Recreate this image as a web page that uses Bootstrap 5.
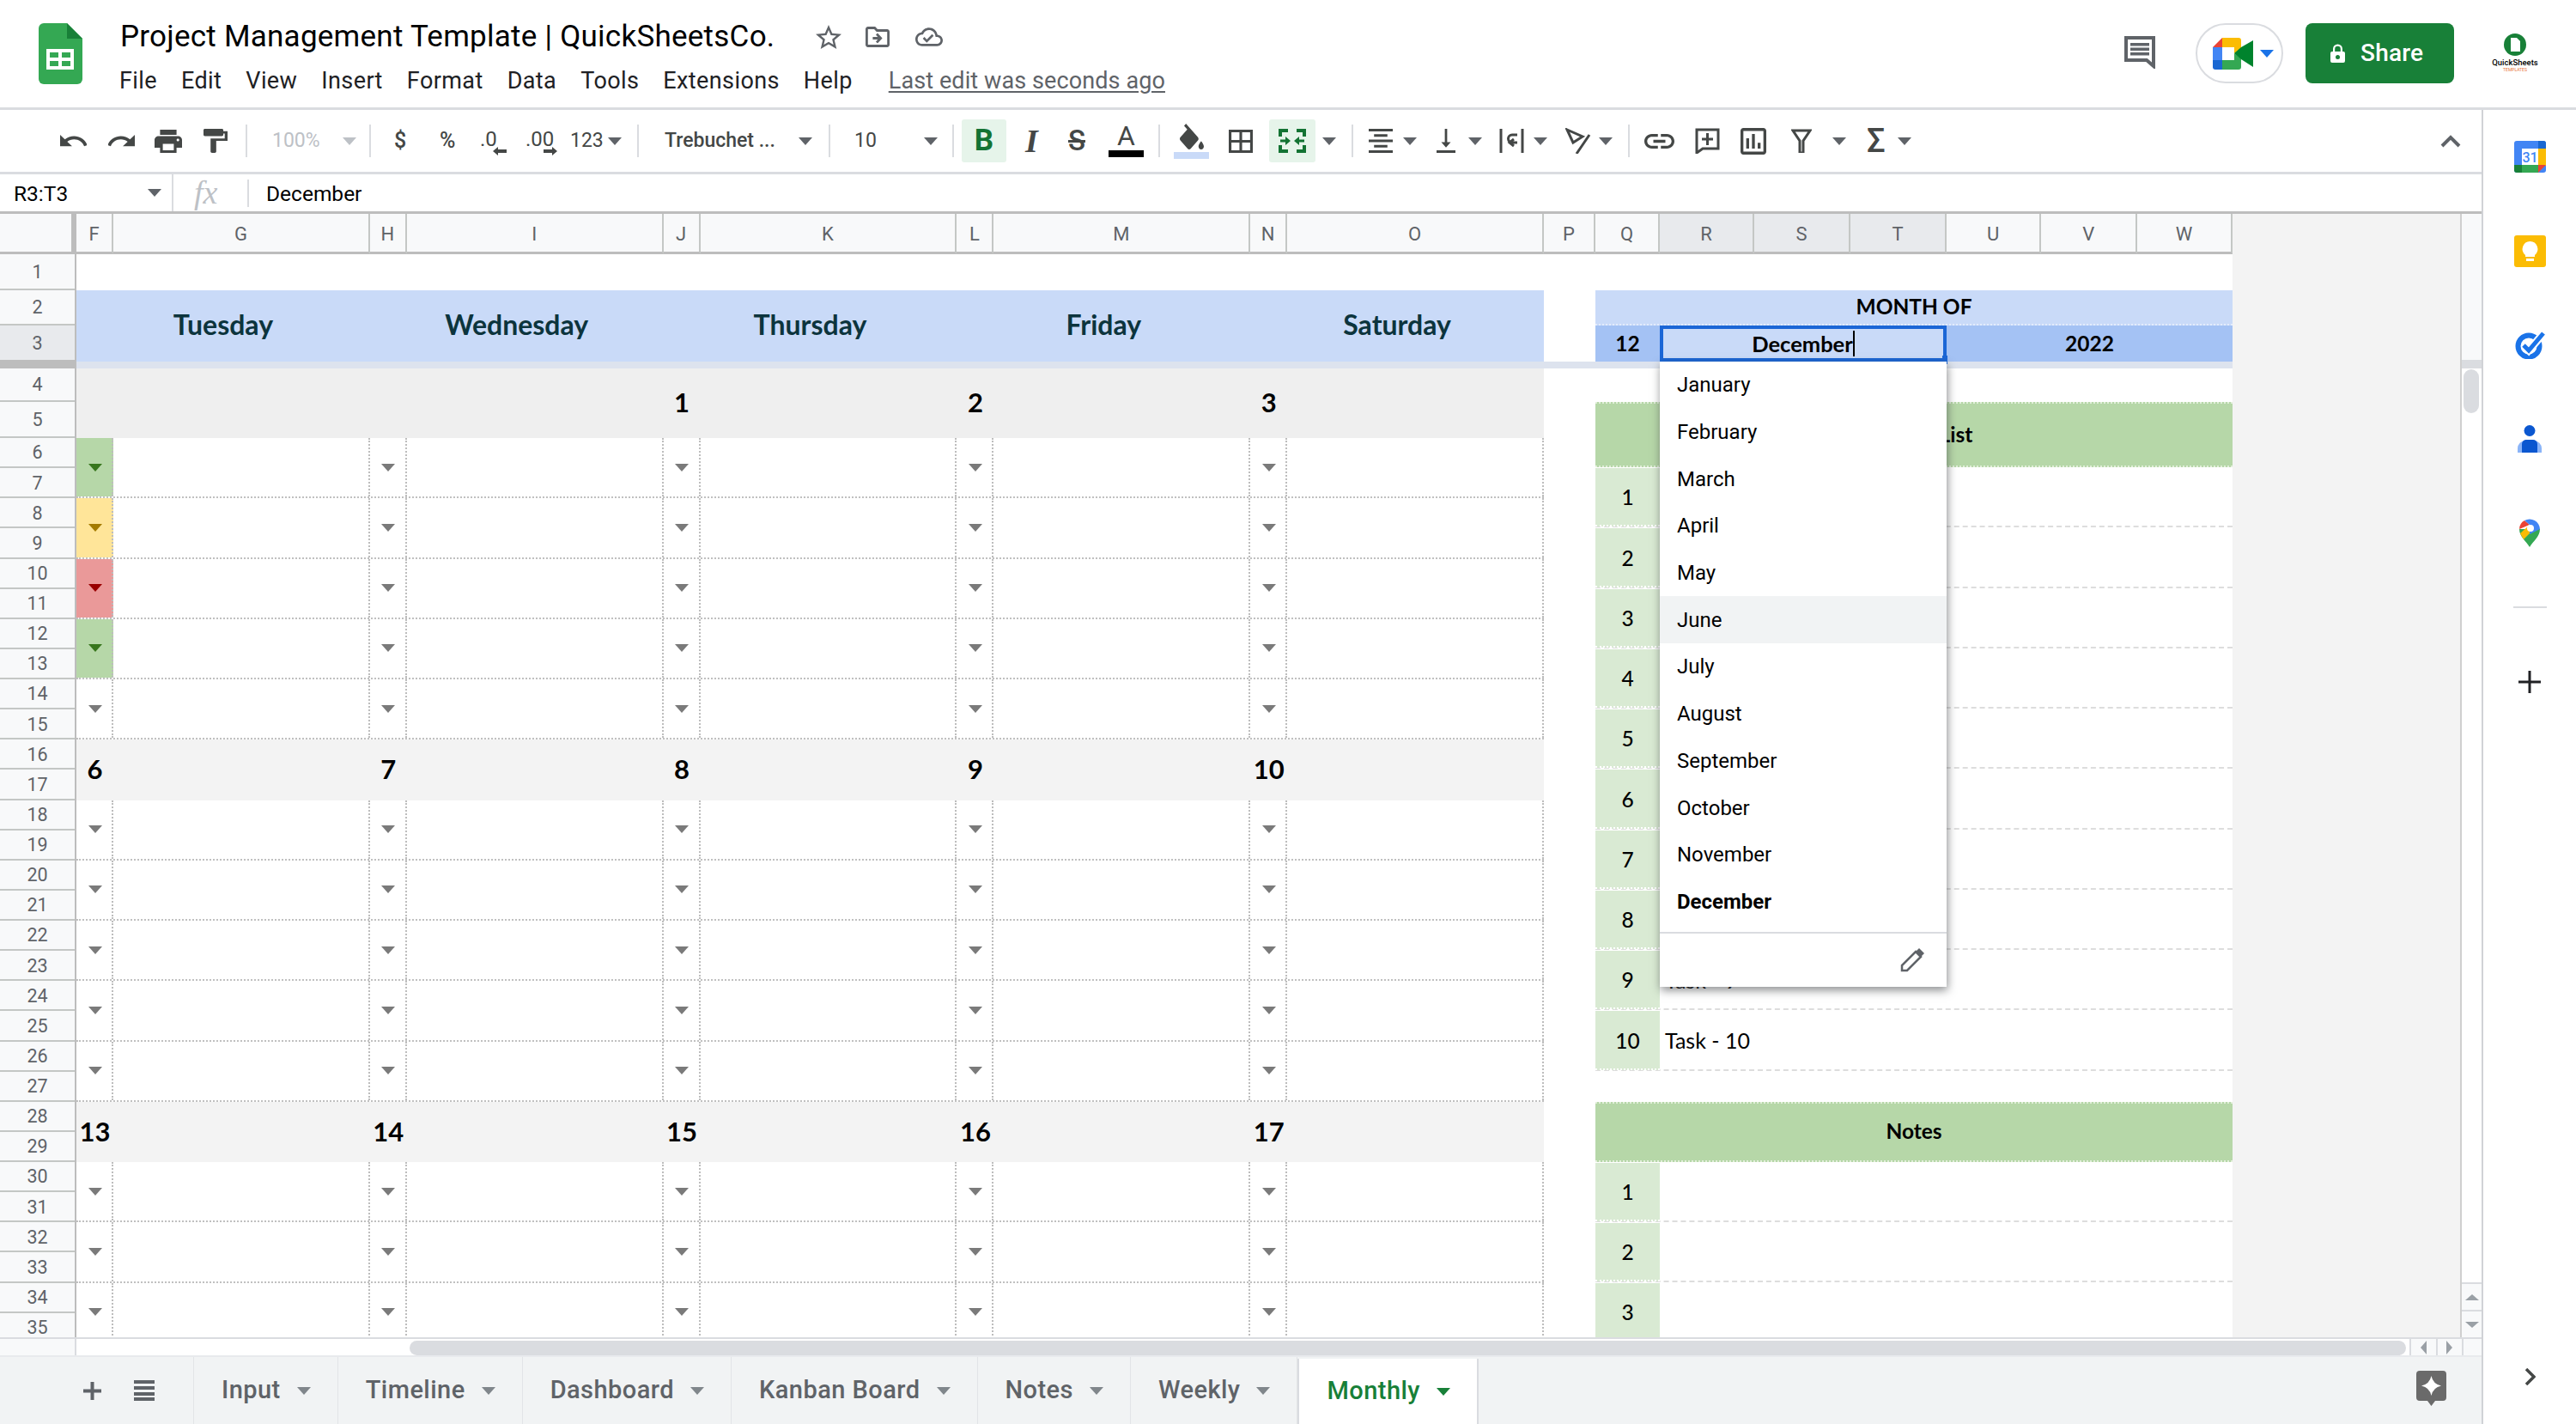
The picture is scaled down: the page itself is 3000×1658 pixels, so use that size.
<!doctype html>
<html lang="en"><head><meta charset="utf-8"><title>Project Management Template</title>
<link href="https://cdn.jsdelivr.net/npm/bootstrap@5.3.0/dist/css/bootstrap.min.css" rel="stylesheet">
<style>
html,body{margin:0;width:3000px;height:1658px;overflow:hidden;background:#fff;font-family:Roboto,sans-serif;color:#000}
.app{width:3000px;height:1658px}
.topbar{height:128px;border-bottom:3px solid #dadce0;flex:none}
.logo{margin:27px 44px 0 45px;flex:none}
.title{font-size:35px;line-height:44px;margin-top:21px;letter-spacing:.25px;white-space:nowrap}
.ti{margin-left:48px}
.ti2{margin-left:28px}.ti3{margin-left:30px}
.menu{gap:28px;font-size:27px;line-height:34px;margin-top:12px;letter-spacing:.4px;color:#202124;margin-left:-1px}
.lastedit{margin-left:14px;color:#5f6368;text-decoration:underline;text-underline-offset:3px;font-size:27px;letter-spacing:.1px}
.topright{margin-left:auto;align-items:flex-start}
.cmt{margin:42px 46px 0 0}
.meetpill{width:102px;height:70px;border:2px solid #dadce0;border-radius:36px;margin-top:27px;padding-left:18px;gap:8px}
.tri{width:0;height:0;border-left:8px solid transparent;border-right:8px solid transparent;border-top:9px solid #5f6368;display:block}
.tri.tblue{border-top-color:#1a73e8}
.share{background:#188038;color:#fff;border:0;border-radius:8px;width:173px;height:70px;margin:27px 0 0 26px;font-size:28px;font-weight:500;gap:18px;padding:0 0 0 29px;letter-spacing:.2px}
.profile{width:142px;padding-top:39px}
.profile b{font-size:9.5px;line-height:10px;font-weight:500;display:block;margin-top:3px}
.profile i{font-size:5px;line-height:6px;color:#e8743b;font-style:normal;display:block}
.left{width:2892px;flex:none;border-right:2px solid #d0d2d6}
.tool{height:75px;flex:none;border-bottom:3px solid #dadce0;display:grid;padding-left:70px;align-items:center;justify-items:start;color:#444746;font-size:23px;
grid-template-columns:56px 54px 57px 49px 31px 82px 31px 29px 53px 47px 53px 52px 44px 34px 32px 156px 35px 30px 81px 33px 11px 68px 53px 50px 58px 18px 64px 47px 62px 34px 20px 40px 39px 37px 36px 40px 37px 39px 34px 19px 59px 53px 59px 48px 40px 36px 40px 1fr}
.sep{width:2px;height:38px;background:#dadce0;display:block}
.gray{color:#bdc1c6}.gray .tri{border-top-color:#bdc1c6}
.bigm{font-size:25px;font-weight:500}
.hl{background:#e6f4ea;color:#137333;width:52px;height:50px;border-radius:3px;font-weight:700;font-size:35px;line-height:50px}
.hl2{width:54px}
.fi{font-family:"Liberation Serif",serif;font-style:italic;font-weight:700;font-size:38px;line-height:38px;padding-left:6px}
.fs{font-size:33px;text-decoration:line-through;text-decoration-thickness:3px;line-height:38px;font-weight:500;padding-left:3px}
.fa{display:flex;flex-direction:column;align-items:center;width:41px;font-size:32px;line-height:30px;margin-top:-3px}
.fa u,.fc u{display:block;width:41px;height:8px;background:#000;margin-top:2px}
.fc{display:flex;flex-direction:column;align-items:center;width:41px}
.fc u{background:#c9daf8;margin-top:3px}
.dec{display:flex;flex-direction:column;line-height:24px;font-size:24px;margin-top:3px}
.dec svg{margin-top:-3px;align-self:flex-end}
.dec.d1{width:31px}.dec.d2{width:37px}
.sig{font-size:38px;line-height:38px;font-weight:500}
.fx{height:46px;flex:none;border-bottom:3px solid #bdbdbd;font-size:24.5px}
.nb{width:202px;border-right:2px solid #dadce0;padding-left:16px;flex:none;height:100%}
.nb span,.fx>span{padding-top:3px}
.fxi{width:86px;flex:none;font-family:"Liberation Serif",serif;font-style:italic;color:#bdc1c6;font-size:38px;padding-left:24px}
.fxs{width:2px;height:32px;background:#dadce0;margin-right:20px}
.gridwrap{height:1308px;flex:none}
.sheet{width:2867px;flex:none;overflow:hidden;background:#f3f3f3;border-right:2px solid #cfcfcf}
.colh{height:47px;flex:none;color:#5f6368;font-size:22px}
.ch{height:47px;display:flex;align-items:center;justify-content:center;background:#f8f9fa;border-right:2px solid #c4c7c5;border-bottom:3px solid #bdbdbd;flex:none;padding-top:2px}
.ch.s{background:#e8eaed}
.corner{width:89px;height:47px;background:#f8f9fa;border-right:6px solid #bdbdbd;border-bottom:3px solid #bdbdbd;flex:none}
.cn{width:43px;flex:none}.cw{width:298.8px;flex:none}.cp{width:60px;flex:none}.cq{width:75px;flex:none}
.cr{width:110px;flex:none}.cs{width:112px;flex:none}.cu{width:110.5px;flex:none}.cv{width:111.5px;flex:none}.cx{width:111px;flex:none}
.rh{width:89px;flex:none;background:#f8f9fa;color:#5f6368;font-size:21.5px;border-right:2px solid #bdbdbd}
.rh div{display:flex;align-items:center;justify-content:center;border-bottom:2px solid #c4c7c5;height:35.14px;padding-top:2px}
.rh .r1{height:42px}.rh .r2{height:41px}.rh .r3{height:42px;background:#e8eaed;border-bottom:2px solid #bdbdbd}.rh .r4{height:39px}.rh .r5{height:42px}
.frozen{height:125px;flex:none}
.cal{width:1709px;flex:none;background:#fff;font-family:Lato,sans-serif}
.dayhd{height:83px;margin-top:42px;background:#c9daf8;color:#0c343d;font-size:32px;font-weight:700;padding-bottom:3px}
.dayhd span{width:341.8px;text-align:center;flex:none}
.white{background:#fff}
.panel{width:742px;flex:none;background:#fff;font-family:Lato,sans-serif;font-size:24.5px}
.m1{height:41px;margin-top:42px;background:#c9daf8;font-weight:700;border-bottom:2px dotted #e3ecfb}
.m2{height:42px;background:#a4c2f4;font-weight:700}
.editor{width:334px;flex:none;background:#c9daf8;border:4px solid #1b66d6;height:42px;position:relative;font-size:25.5px}
.editor em{font-style:normal;border-right:2px solid #000;line-height:30px}
.handle{position:absolute;right:-5px;bottom:-7px;width:6px;height:10px;background:#1b66d6}
.menu-dd.dropdown-menu{position:absolute;left:-4px;top:38px;width:334px;margin:0;padding:0;border:0;border-radius:0;z-index:1000;box-shadow:1px 4px 10px rgba(60,64,67,.6);background:#fff;font-family:Roboto,sans-serif;font-weight:400;font-size:24px}
.menu-dd .dropdown-item{height:54.7px;padding:0 0 0 20px;display:flex;align-items:center;color:#000}
.menu-dd .dropdown-item.hov{background:#f1f3f4}
.menu-dd .dropdown-item.cur{font-weight:700}
.menu-dd .ft{border-top:2px solid #dadce0;height:64px;margin-top:8px;display:flex;align-items:center;justify-content:flex-end;padding-right:26px}
.band{height:8px;flex:none}
.band .a{width:89px;background:#bdbdbd;flex:none}
.band .b{width:2511px;background:#dde3ee;flex:none}
.bodyrow{flex:1 1 auto;min-height:0;overflow:hidden}
.day{height:70.28px;background:#f3f3f3;font-weight:700;font-size:31px;line-height:1;padding-bottom:2px}
.day.first{height:81px;background:#efefef}
.day .cn{display:flex;justify-content:center;align-items:center;height:100%}
.tr{height:70.28px;border-bottom:2px dotted #c0c0c0}
.tr .cn{display:flex;align-items:center;justify-content:center;border-right:2px dotted #bdbdbd;height:100%;padding-left:2px}
.tr .cw{border-right:2px dotted #bdbdbd;height:100%}
.ar{width:0;height:0;border-left:8px solid transparent;border-right:8px solid transparent;border-top:9px solid #7a7a7a;display:block}
.g1{background:#b6d7a8}.g1 .ar{border-top-color:#38761d}
.g2{background:#ffe599}.g2 .ar{border-top-color:#a47b00}
.g3{background:#ea9999}.g3 .ar{border-top-color:#990000}
.phead{height:76px;margin-top:39px;background:#b6d7a8;font-weight:700;border-top:2px dotted #e2efda;border-bottom:2px dotted #e2efda}
.phead.n{height:70px;margin-top:36px}
.prow{height:70.28px;border-bottom:2px dashed #ddd}
.prow>.cq{height:100%;background:#d9ead3;display:flex;align-items:center;justify-content:center;font-weight:500;border-bottom:2px dotted #fff;margin-bottom:-2px;padding-top:3px}
.prow>.t{padding:3px 0 0 6px;font-size:25px}
.vs{width:23px;flex:none;background:#fff}
.vs .t{height:170px;background:#f8f9fa;flex:none}
.vs .b{height:10px;background:#dadce0;flex:none}
.vs .th{width:18px;height:51px;background:#dadce0;border-radius:9px;margin:1px 0 0 2px;flex:none}
.vs .k{height:32px;background:#f8f9fa;border-top:2px solid #dadce0;flex:none;display:flex;align-items:center;justify-content:center}
.upar{width:0;height:0;border-left:8px solid transparent;border-right:8px solid transparent;border-bottom:7px solid #9aa0a6}
.dnar{width:0;height:0;border-left:8px solid transparent;border-right:8px solid transparent;border-top:7px solid #9aa0a6}
.lfar{width:0;height:0;border-top:8px solid transparent;border-bottom:8px solid transparent;border-right:7px solid #9aa0a6}
.rtar{width:0;height:0;border-top:8px solid transparent;border-bottom:8px solid transparent;border-left:7px solid #9aa0a6}
.hs{height:23px;flex:none;border-top:2px solid #dadce0;border-bottom:2px solid #e8eaed}
.hs .l{width:89px;background:#f8f9fa;border-right:2px solid #dadce0;flex:none}
.hs .tr2{width:2717px;flex:none;padding:2px 0 0 388px}
.hs .tr2 i{display:block;width:2325px;height:17px;background:#dadce0;border-radius:9px}
.hs .bt{width:30.5px;flex:none;background:#f8f9fa;border-left:2px solid #dadce0;display:flex;align-items:center;justify-content:center}
.hs .co{flex:1 1 auto;background:#f8f9fa;border-left:2px solid #dadce0}
.tabs{flex:1 1 auto;background:#f1f3f4;font-size:29px;font-weight:500;color:#5f6368;letter-spacing:.45px}
.tctl{width:226px;flex:none;padding-left:97px;gap:38px;border-right:1px solid #e2e4e7;height:100%}
.tab{height:100%;padding:0 31px 0 32px;gap:19px;border-right:1px solid #e2e4e7;flex:none}
.tab .tri{border-top-color:#80868b}
.tab.act{background:#fff;color:#188038;margin-top:2px;height:76px;border-left:2px solid #dadce0;border-right:2px solid #dadce0}
.tab.act .tri{border-top-color:#188038}
.explore{margin-left:auto;margin-right:41px;margin-top:-6px}
.side{width:108px;flex:none}
.sw{height:109.5px;flex:none}
.sd{width:39px;height:2px;background:#dadce0;margin:30px auto 0;flex:none}
.sp{height:60px;margin-top:56px;flex:none}
.sc{height:60px;margin-top:auto;margin-bottom:25px;flex:none}
</style></head>
<body>
<div class="app d-flex flex-column">
<header class="topbar d-flex">
 <svg class="logo" width="51" height="71" viewBox="0 0 51 71"><path fill="#34a853" d="M6 0h27l18 18v47a6 6 0 0 1-6 6H6a6 6 0 0 1-6-6V6a6 6 0 0 1 6-6z"/><path fill="#188038" d="M33 0l18 18-18 0z"/><path fill="#fff" d="M9 30h32v24H9z"/><path fill="#34a853" d="M13 34h10v6H13zM27 34h10v6H27zM13 44h10v6H13zM27 44h10v6H27z"/></svg>
 <div class="flex-shrink-0">
  <div class="title d-flex align-items-center">Project Management Template | QuickSheetsCo.
   <svg class="ti" width="30" height="28" viewBox="2 2 20 19" preserveAspectRatio="none"><path fill="#5f6368" d="M22 9.24l-7.19-.62L12 2 9.19 8.63 2 9.24l5.46 4.73L5.82 21 12 17.27 18.18 21l-1.63-7.03L22 9.24zM12 15.4l-3.76 2.27 1-4.28-3.32-2.88 4.38-.38L12 6.1l1.71 4.04 4.38.38-3.32 2.88 1 4.28L12 15.4z"/></svg>
   <svg class="ti2" width="28" height="24" viewBox="2 4 20 16" preserveAspectRatio="none"><path fill="#5f6368" d="M20 6h-8l-2-2H4c-1.1 0-1.99.9-1.99 2L2 18c0 1.1.9 2 2 2h16c1.1 0 2-.9 2-2V8c0-1.1-.9-2-2-2zm0 12H4V6h5.17l2 2H20v10zm-8.01-9l-1.41 1.41L12.16 12H8v2h4.16l-1.59 1.59L11.99 17 16 13.01 11.99 9z"/></svg>
   <svg class="ti3" width="32" height="22" viewBox="0 4 24 16"><path fill="#5f6368" d="M19.35 10.04C18.67 6.59 15.64 4 12 4 9.11 4 6.6 5.64 5.35 8.04 2.34 8.36 0 10.91 0 14c0 3.31 2.69 6 6 6h13c2.76 0 5-2.24 5-5 0-2.64-2.05-4.78-4.65-4.96zM19 18H6c-2.21 0-4-1.79-4-4 0-2.05 1.53-3.76 3.56-3.97l1.07-.11.5-.95C8.08 7.14 9.94 6 12 6c2.62 0 4.88 1.86 5.39 4.43l.3 1.5 1.53.11c1.56.1 2.78 1.41 2.78 2.96 0 1.65-1.35 3-3 3zm-9-3.82l-2.09-2.09L6.5 13.5 10 17l6.01-6.01-1.41-1.41z"/></svg>
  </div>
  <nav class="menu d-flex"><span>File</span><span>Edit</span><span>View</span><span>Insert</span><span>Format</span><span>Data</span><span>Tools</span><span>Extensions</span><span>Help</span><span class="lastedit">Last edit was seconds ago</span></nav>
 </div>
 <div class="topright d-flex">
  <svg class="cmt" width="38" height="38" viewBox="0 0 38 38"><path fill="#fff" stroke="#5f6368" stroke-width="4" d="M3 2h32v25 8l-8-7H3z"/><path fill="#5f6368" d="M8 8h22v3.5H8zM8 13.5h22V17H8zM8 19h22v3.5H8z"/></svg>
  <div class="meetpill d-flex align-items-center">
   <svg width="47" height="37" viewBox="0 0 47 37"><path fill="#ea4335" d="M11 0 0 11h11z"/><path fill="#fbbc04" d="M11 0h19a3 3 0 0 1 3 3v10l-8 5v-7H11z"/><path fill="#4285f4" d="M0 11h11v15H0z"/><path fill="#1967d2" d="M0 26h11v11H3a3 3 0 0 1-3-3z"/><path fill="#34a853" d="M11 26h14v-8l8 6v10a3 3 0 0 1-3 3H11z"/><path fill="#00832d" d="M25 18 33 11 47 3v31L33 25z"/></svg>
   <span class="tri tblue"></span>
  </div>
  <button class="share btn d-flex align-items-center" type="button">
   <svg width="17" height="22" viewBox="0 0 17 22"><path fill="#fff" d="M3 9V6a5.5 5.5 0 0 1 11 0v3h1a2 2 0 0 1 2 2v9a2 2 0 0 1-2 2H2a2 2 0 0 1-2-2v-9a2 2 0 0 1 2-2zm2.2 0h6.6V6a3.3 3.3 0 0 0-6.6 0z"/><circle cx="8.5" cy="15.5" r="2.5" fill="#188038"/></svg>
   Share</button>
  <div class="profile text-center">
   <svg width="26" height="26" viewBox="0 0 26 26"><circle cx="13" cy="13" r="13" fill="#188038"/><path fill="#fff" d="M8 5h7l4 4v12H8z"/></svg>
   <b>QuickSheets</b><i>TEMPLATES</i>
  </div>
 </div>
</header>
<div class="d-flex flex-grow-1" id="mainrow">
<div class="left d-flex flex-column">
 <div class="tool">
  <svg width="31" height="14" viewBox="2 7 20 9.5" preserveAspectRatio="none"><path fill="#444746" d="M12.5 8c-2.65 0-5.05.99-6.9 2.6L2 7v9h9l-3.62-3.62c1.39-1.16 3.16-1.88 5.12-1.88 3.54 0 6.55 2.31 7.6 5.5l2.37-.78C21.08 11.03 17.15 8 12.5 8z"/></svg>
  <svg width="31" height="14" viewBox="2 7 20 9.5" preserveAspectRatio="none"><path fill="#444746" d="M18.4 10.6C16.55 8.99 14.15 8 11.5 8c-4.65 0-8.58 3.03-9.96 7.22L3.9 16c1.05-3.19 4.05-5.5 7.6-5.5 1.95 0 3.73.72 5.12 1.88L13 16h9V7l-3.6 3.6z"/></svg>
  <svg width="32" height="27" viewBox="2 3 20 18" preserveAspectRatio="none"><path fill="#444746" d="M19 8H5c-1.66 0-3 1.34-3 3v6h4v4h12v-4h4v-6c0-1.66-1.34-3-3-3zm-3 11H8v-5h8v5zm3-7c-.55 0-1-.45-1-1s.45-1 1-1 1 .45 1 1-.45 1-1 1zm-1-9H6v4h12V3z"/></svg>
  <svg width="28" height="28" viewBox="4 2 17 20" preserveAspectRatio="none"><path fill="#444746" d="M18 4V3c0-.55-.45-1-1-1H5c-.55 0-1 .45-1 1v4c0 .55.45 1 1 1h12c.55 0 1-.45 1-1V6h1v4H9v11c0 .55.45 1 1 1h2c.55 0 1-.45 1-1v-9h8V4h-3z"/></svg>
  <i class="sep"></i>
  <span class="gray">100%</span><span class="gray"><i class="tri"></i></span><i class="sep"></i>
  <span class="bigm">$</span><span class="bigm">%</span>
  <span class="dec d1">.0<svg width="16" height="10" viewBox="0 0 16 10"><path fill="#444746" d="M0 5l6-5v3h10v4H6v3z"/></svg></span>
  <span class="dec d2">.00<svg width="16" height="10" viewBox="0 0 16 10"><path fill="#444746" d="M16 5l-6-5v3H0v4h10v3z"/></svg></span>
  <span>123</span><i class="tri"></i><i class="sep"></i>
  <span class="fw-medium">Trebuchet ...</span><i class="tri"></i><i class="sep"></i>
  <span>10</span><i class="tri"></i><i class="sep"></i>
  <span class="hl text-center">B</span>
  <span class="fi">I</span>
  <span class="fs">S</span>
  <span class="fa">A<u></u></span>
  <i class="sep"></i>
  <span class="fc"><svg width="28" height="30" viewBox="3 0 18 17" preserveAspectRatio="none"><path fill="#444746" d="M7.62 0 6.21 1.41l2.38 2.38-5.15 5.15c-.59.59-.59 1.54 0 2.12l5.5 5.5c.58.58 1.54.58 2.12 0l5.5-5.5c.59-.58.59-1.53 0-2.12zM19 11.5s-2 2.17-2 3.5c0 1.1.9 2 2 2s2-.9 2-2c0-1.33-2-3.5-2-3.5z"/></svg><u></u></span>
  <svg width="28" height="27" viewBox="3 3 18 18" preserveAspectRatio="none"><path fill="#444746" d="M3 3v18h18V3H3zm8 16H5v-6h6v6zm0-8H5V5h6v6zm8 8h-6v-6h6v6zm0-8h-6V5h6v6z"/></svg>
  <span class="hl hl2 d-flex align-items-center justify-content-center"><svg width="32" height="28" viewBox="0 0 32 28"><path fill="none" stroke="#137333" stroke-width="4" d="M2 9V2h9M21 2h9v7M30 19v7h-9M11 26H2v-7"/><path fill="#137333" d="M2 12.5h6V9l6 5-6 5v-3.500H2zM30 12.500h-6V9l-6 5 6 5v-3.500h6z"/></svg></span>
  <i class="tri"></i><i class="sep"></i>
  <svg width="28" height="28" viewBox="3 3 18 18" preserveAspectRatio="none"><path fill="#444746" d="M7 15v2h10v-2H7zm-4 6h18v-2H3v2zm0-8h18v-2H3v2zm4-6v2h10V7H7zM3 3v2h18V3H3z"/></svg>
  <i class="tri"></i>
  <svg width="22" height="28" viewBox="4 3 16 18" preserveAspectRatio="none"><path fill="#444746" d="M16 13h-3V3h-2v10H8l4 4 4-4zM4 19v2h16v-2H4z"/></svg>
  <i class="tri"></i>
  <svg width="29" height="28" viewBox="0 0 29 28"><path fill="none" stroke="#444746" stroke-width="3" d="M2 0v28M27 0v28M21 7h-6a4.500 4.500 0 0 0 0 9h6M17 12l-5 4 5 4"/></svg>
  <i class="tri"></i>
  <svg width="30" height="30" viewBox="0 0 30 30"><path fill="none" stroke="#444746" stroke-width="3" d="M2 2l18 8-11 7zM28 8L13 30"/></svg>
  <i class="tri"></i><i class="sep"></i>
  <svg width="35" height="17" viewBox="2 7 20 10" preserveAspectRatio="none"><path fill="#444746" d="M3.900 12c0-1.710 1.390-3.100 3.100-3.100h4V7H7c-2.760 0-5 2.240-5 5s2.240 5 5 5h4v-1.900H7c-1.710 0-3.100-1.390-3.100-3.100zM8 13h8v-2H8v2zm9-6h-4v1.900h4c1.710 0 3.100 1.390 3.100 3.100s-1.390 3.100-3.100 3.100h-4V17h4c2.760 0 5-2.240 5-5s-2.240-5-5-5z"/></svg>
  <svg width="29" height="30" viewBox="0 0 29 30"><path fill="none" stroke="#444746" stroke-width="3" d="M2 2h25v22H9l-7 5z"/><path fill="none" stroke="#444746" stroke-width="3" d="M14.500 6v14M8 13h13"/></svg>
  <svg width="30" height="31" viewBox="3 3 18 18" preserveAspectRatio="none"><path fill="#444746" d="M19 3H5c-1.100 0-2 .9-2 2v14c0 1.100.9 2 2 2h14c1.100 0 2-.9 2-2V5c0-1.100-.9-2-2-2zm0 16H5V5h14v14zM7 10h2v7H7zm4-3h2v10h-2zm4 6h2v4h-2z"/></svg>
  <svg width="24" height="28" viewBox="0 0 24 28"><path fill="none" stroke="#444746" stroke-width="3" d="M2 2h20l-8 12v14h-4V14z"/></svg>
  <i class="tri"></i>
  <span class="sig">Σ</span>
  <i class="tri"></i>
  <svg class="ms-auto me-4" width="24" height="15" viewBox="0 0 24 15"><path fill="none" stroke="#5f6368" stroke-width="4" d="M2 13L12 3l10 10"/></svg>
 </div>
 <div class="fx d-flex align-items-center">
  <div class="nb d-flex align-items-center justify-content-between pe-2"><span>R3:T3</span><i class="tri me-1"></i></div>
  <div class="fxi">fx</div><i class="fxs"></i><span>December</span>
 </div>
 <div class="gridwrap d-flex">
  <div class="sheet d-flex flex-column">
   <div class="colh d-flex">
    <div class="corner"></div>
    <div class="ch cn">F</div><div class="ch cw">G</div><div class="ch cn">H</div><div class="ch cw">I</div><div class="ch cn">J</div><div class="ch cw">K</div><div class="ch cn">L</div><div class="ch cw">M</div><div class="ch cn">N</div><div class="ch cw">O</div>
    <div class="ch cp">P</div><div class="ch cq">Q</div><div class="ch cr s">R</div><div class="ch cs s">S</div><div class="ch cs s">T</div><div class="ch cu">U</div><div class="ch cv">V</div><div class="ch cx">W</div>
   </div>
   <div class="frozen d-flex">
    <div class="rh"><div class="r1">1</div><div class="r2">2</div><div class="r3">3</div></div>
    <div class="cal"><div class="dayhd d-flex align-items-center"><span>Tuesday</span><span>Wednesday</span><span>Thursday</span><span>Friday</span><span>Saturday</span></div></div>
    <div class="cp white"></div>
    <div class="panel">
     <div class="m1 d-flex align-items-center justify-content-center">MONTH OF</div>
     <div class="m2 d-flex align-items-center text-center">
      <div class="cq">12</div>
      <div class="editor d-flex align-items-center justify-content-center"><em>December</em><i class="handle"></i>
       <div class="dropdown-menu show menu-dd">
        <a class="dropdown-item">January</a><a class="dropdown-item">February</a><a class="dropdown-item">March</a><a class="dropdown-item">April</a><a class="dropdown-item">May</a><a class="dropdown-item hov">June</a><a class="dropdown-item">July</a><a class="dropdown-item">August</a><a class="dropdown-item">September</a><a class="dropdown-item">October</a><a class="dropdown-item">November</a><a class="dropdown-item cur">December</a>
        <div class="ft"><svg width="28" height="28" viewBox="0 0 28 28"><path fill="none" stroke="#5f6368" stroke-width="2.500" d="M2 26v-6L18 4l6 6L8 26z"/><path fill="#5f6368" d="M18 4l4-4 6 6-4 4z"/></svg></div>
       </div>
      </div>
      <div class="flex-grow-1">2022</div>
     </div>
    </div>
   </div>
   <div class="band d-flex"><div class="a"></div><div class="b"></div></div>
   <div class="bodyrow d-flex">
    <div class="rh">
     <div class="r4">4</div><div class="r5">5</div><div>6</div><div>7</div><div>8</div><div>9</div><div>10</div><div>11</div><div>12</div><div>13</div><div>14</div><div>15</div><div>16</div><div>17</div><div>18</div><div>19</div><div>20</div><div>21</div><div>22</div><div>23</div><div>24</div><div>25</div><div>26</div><div>27</div><div>28</div><div>29</div><div>30</div><div>31</div><div>32</div><div>33</div><div>34</div><div>35</div>
    </div>
    <div class="cal">
     <div class="day first d-flex"><div class="cn"></div><div class="cw"></div><div class="cn"></div><div class="cw"></div><div class="cn">1</div><div class="cw"></div><div class="cn">2</div><div class="cw"></div><div class="cn">3</div><div class="cw"></div></div>
     <div class="tr d-flex"><div class="cn g1"><i class="ar"></i></div><div class="cw"></div><div class="cn"><i class="ar"></i></div><div class="cw"></div><div class="cn"><i class="ar"></i></div><div class="cw"></div><div class="cn"><i class="ar"></i></div><div class="cw"></div><div class="cn"><i class="ar"></i></div><div class="cw"></div></div>
     <div class="tr d-flex"><div class="cn g2"><i class="ar"></i></div><div class="cw"></div><div class="cn"><i class="ar"></i></div><div class="cw"></div><div class="cn"><i class="ar"></i></div><div class="cw"></div><div class="cn"><i class="ar"></i></div><div class="cw"></div><div class="cn"><i class="ar"></i></div><div class="cw"></div></div>
     <div class="tr d-flex"><div class="cn g3"><i class="ar"></i></div><div class="cw"></div><div class="cn"><i class="ar"></i></div><div class="cw"></div><div class="cn"><i class="ar"></i></div><div class="cw"></div><div class="cn"><i class="ar"></i></div><div class="cw"></div><div class="cn"><i class="ar"></i></div><div class="cw"></div></div>
     <div class="tr d-flex"><div class="cn g1"><i class="ar"></i></div><div class="cw"></div><div class="cn"><i class="ar"></i></div><div class="cw"></div><div class="cn"><i class="ar"></i></div><div class="cw"></div><div class="cn"><i class="ar"></i></div><div class="cw"></div><div class="cn"><i class="ar"></i></div><div class="cw"></div></div>
     <div class="tr d-flex"><div class="cn"><i class="ar"></i></div><div class="cw"></div><div class="cn"><i class="ar"></i></div><div class="cw"></div><div class="cn"><i class="ar"></i></div><div class="cw"></div><div class="cn"><i class="ar"></i></div><div class="cw"></div><div class="cn"><i class="ar"></i></div><div class="cw"></div></div>
     <div class="day d-flex"><div class="cn">6</div><div class="cw"></div><div class="cn">7</div><div class="cw"></div><div class="cn">8</div><div class="cw"></div><div class="cn">9</div><div class="cw"></div><div class="cn">10</div><div class="cw"></div></div>
     <div class="tr d-flex"><div class="cn"><i class="ar"></i></div><div class="cw"></div><div class="cn"><i class="ar"></i></div><div class="cw"></div><div class="cn"><i class="ar"></i></div><div class="cw"></div><div class="cn"><i class="ar"></i></div><div class="cw"></div><div class="cn"><i class="ar"></i></div><div class="cw"></div></div>
     <div class="tr d-flex"><div class="cn"><i class="ar"></i></div><div class="cw"></div><div class="cn"><i class="ar"></i></div><div class="cw"></div><div class="cn"><i class="ar"></i></div><div class="cw"></div><div class="cn"><i class="ar"></i></div><div class="cw"></div><div class="cn"><i class="ar"></i></div><div class="cw"></div></div>
     <div class="tr d-flex"><div class="cn"><i class="ar"></i></div><div class="cw"></div><div class="cn"><i class="ar"></i></div><div class="cw"></div><div class="cn"><i class="ar"></i></div><div class="cw"></div><div class="cn"><i class="ar"></i></div><div class="cw"></div><div class="cn"><i class="ar"></i></div><div class="cw"></div></div>
     <div class="tr d-flex"><div class="cn"><i class="ar"></i></div><div class="cw"></div><div class="cn"><i class="ar"></i></div><div class="cw"></div><div class="cn"><i class="ar"></i></div><div class="cw"></div><div class="cn"><i class="ar"></i></div><div class="cw"></div><div class="cn"><i class="ar"></i></div><div class="cw"></div></div>
     <div class="tr d-flex"><div class="cn"><i class="ar"></i></div><div class="cw"></div><div class="cn"><i class="ar"></i></div><div class="cw"></div><div class="cn"><i class="ar"></i></div><div class="cw"></div><div class="cn"><i class="ar"></i></div><div class="cw"></div><div class="cn"><i class="ar"></i></div><div class="cw"></div></div>
     <div class="day d-flex"><div class="cn">13</div><div class="cw"></div><div class="cn">14</div><div class="cw"></div><div class="cn">15</div><div class="cw"></div><div class="cn">16</div><div class="cw"></div><div class="cn">17</div><div class="cw"></div></div>
     <div class="tr d-flex"><div class="cn"><i class="ar"></i></div><div class="cw"></div><div class="cn"><i class="ar"></i></div><div class="cw"></div><div class="cn"><i class="ar"></i></div><div class="cw"></div><div class="cn"><i class="ar"></i></div><div class="cw"></div><div class="cn"><i class="ar"></i></div><div class="cw"></div></div>
     <div class="tr d-flex"><div class="cn"><i class="ar"></i></div><div class="cw"></div><div class="cn"><i class="ar"></i></div><div class="cw"></div><div class="cn"><i class="ar"></i></div><div class="cw"></div><div class="cn"><i class="ar"></i></div><div class="cw"></div><div class="cn"><i class="ar"></i></div><div class="cw"></div></div>
     <div class="tr d-flex"><div class="cn"><i class="ar"></i></div><div class="cw"></div><div class="cn"><i class="ar"></i></div><div class="cw"></div><div class="cn"><i class="ar"></i></div><div class="cw"></div><div class="cn"><i class="ar"></i></div><div class="cw"></div><div class="cn"><i class="ar"></i></div><div class="cw"></div></div>
    </div>
    <div class="cp white"></div>
    <div class="panel">
     <div class="phead d-flex align-items-center justify-content-center">Monthly List</div>
     <div class="prow d-flex align-items-center"><div class="cq">1</div></div>
     <div class="prow d-flex align-items-center"><div class="cq">2</div></div>
     <div class="prow d-flex align-items-center"><div class="cq">3</div></div>
     <div class="prow d-flex align-items-center"><div class="cq">4</div></div>
     <div class="prow d-flex align-items-center"><div class="cq">5</div></div>
     <div class="prow d-flex align-items-center"><div class="cq">6</div></div>
     <div class="prow d-flex align-items-center"><div class="cq">7</div></div>
     <div class="prow d-flex align-items-center"><div class="cq">8</div></div>
     <div class="prow d-flex align-items-center"><div class="cq">9</div><div class="t">Task - 9</div></div>
     <div class="prow d-flex align-items-center"><div class="cq">10</div><div class="t">Task - 10</div></div>
     <div class="phead n d-flex align-items-center justify-content-center">Notes</div>
     <div class="prow d-flex align-items-center"><div class="cq">1</div></div>
     <div class="prow d-flex align-items-center"><div class="cq">2</div></div>
     <div class="prow d-flex align-items-center"><div class="cq">3</div></div>
    </div>
   </div>
  </div>
  <div class="vs d-flex flex-column">
   <div class="t"></div><div class="b"></div><div class="th"></div><div class="flex-grow-1"></div>
   <div class="k"><i class="upar"></i></div><div class="k"><i class="dnar"></i></div>
  </div>
 </div>
 <div class="hs d-flex">
  <div class="l"></div><div class="tr2"><i></i></div>
  <div class="bt"><i class="lfar"></i></div><div class="bt"><i class="rtar"></i></div><div class="co"></div>
 </div>
 <div class="tabs d-flex">
  <div class="tctl d-flex align-items-center">
   <svg width="21" height="21" viewBox="0 0 21 21"><path fill="#5f6368" d="M8.500 0h4v8.500H21v4h-8.500V21h-4v-8.500H0v-4h8.500z"/></svg>
   <svg width="24" height="24" viewBox="0 0 24 24"><path fill="#5f6368" d="M0 0h24v4H0zM0 7h24v4H0zM0 14h24v4H0zM0 20h24v4H0z"/></svg>
  </div>
  <div class="tab d-flex align-items-center">Input<i class="tri"></i></div>
  <div class="tab d-flex align-items-center">Timeline<i class="tri"></i></div>
  <div class="tab d-flex align-items-center">Dashboard<i class="tri"></i></div>
  <div class="tab d-flex align-items-center">Kanban Board<i class="tri"></i></div>
  <div class="tab d-flex align-items-center">Notes<i class="tri"></i></div>
  <div class="tab d-flex align-items-center">Weekly<i class="tri"></i></div>
  <div class="tab act d-flex align-items-center">Monthly<i class="tri"></i></div>
  <svg class="explore align-self-center" width="35" height="41" viewBox="0 0 35 41"><path fill="#6a6a6a" d="M4 0h27a4 4 0 0 1 4 4v27a4 4 0 0 1-4 4h-9l-4.500 6-4.500-6H4a4 4 0 0 1-4-4V4a4 4 0 0 1 4-4z"/><path fill="#fff" d="M17.500 6q2 9.500 11.500 11.500-9.500 2-11.500 11.500-2-9.500-11.500-11.500 9.500-2 11.500-11.500z"/></svg>
 </div>
</div>
<aside class="side d-flex flex-column align-items-center">
 <div class="sw d-flex align-items-center justify-content-center"><svg width="37" height="37" viewBox="0 0 37 37"><rect width="37" height="37" rx="3" fill="#4285f4"/><path fill="#fbbc04" d="M28 9h9v20h-9z"/><path fill="#34a853" d="M9 28h19v9H9z"/><path fill="#188038" d="M0 28h9v9H3a3 3 0 0 1-3-3z"/><path fill="#1967d2" d="M28 0h6a3 3 0 0 1 3 3v6h-9z"/><path fill="#ea4335" d="M28 37v-9h9z"/><path fill="#fff" d="M9 9h19v19H9z"/><text x="18.500" y="25" text-anchor="middle" font-family="Roboto,sans-serif" font-size="16" font-weight="500" fill="#4285f4">31</text></svg></div>
 <div class="sw d-flex align-items-center justify-content-center"><svg width="37" height="37" viewBox="0 0 37 37"><rect width="37" height="37" rx="3" fill="#fbbc04"/><path fill="#fff" d="M18.500 7a9 9 0 0 1 5.500 16v2h-11v-2A9 9 0 0 1 18.500 7zM14 27h9v3h-9z"/></svg></div>
 <div class="sw d-flex align-items-center justify-content-center"><svg width="35" height="33" viewBox="0 0 35 33"><circle cx="16" cy="18" r="12.500" fill="none" stroke="#1a73e8" stroke-width="6"/><path fill="none" stroke="#fff" stroke-width="9" d="M10 17l6 6 13-15"/><path fill="none" stroke="#1a73e8" stroke-width="5" d="M10 17l6 6 17-20"/></svg></div>
 <div class="sw d-flex align-items-center justify-content-center"><svg width="28" height="32" viewBox="0 0 28 32"><ellipse cx="14" cy="6.500" rx="6.500" ry="6.500" fill="#0b57d0"/><path fill="#8ab4f8" d="M0 32v-5a9 9 0 0 1 9-9h10a9 9 0 0 1 9 9v5z"/><path fill="#0b57d0" d="M5 32V22a5 5 0 0 1 5-5h8a5 5 0 0 1 5 5v10z"/></svg></div>
 <div class="sw d-flex align-items-center justify-content-center"><svg width="24" height="33" viewBox="0 0 24 33"><path fill="#34a853" d="M12 33C8 26 0 21 0 12h24c0 9-8 14-12 21z"/><path fill="#fbbc04" d="M1 17 12 7v10L5 24z"/><path fill="#ea4335" d="M0 12A12 12 0 0 1 6 2l6 5z"/><path fill="#4285f4" d="M6 2a12 12 0 0 1 18 10L12 18V7z"/><circle cx="13" cy="11" r="4" fill="#fff"/></svg></div>
 <div class="sd"></div>
 <div class="sp d-flex align-items-center"><svg width="26" height="26" viewBox="0 0 26 26"><path fill="#202124" d="M11.500 0h3v11.500H26v3H14.500V26h-3V14.500H0v-3h11.500z"/></svg></div>
 <div class="sc d-flex align-items-center"><svg width="13" height="20" viewBox="0 0 13 20"><path fill="none" stroke="#444746" stroke-width="3.500" d="M2 1l9 9-9 9"/></svg></div>
</aside>
</div>
</div>
<script src="https://cdn.jsdelivr.net/npm/bootstrap@5.3.0/dist/js/bootstrap.bundle.min.js"></script>
</body></html>
